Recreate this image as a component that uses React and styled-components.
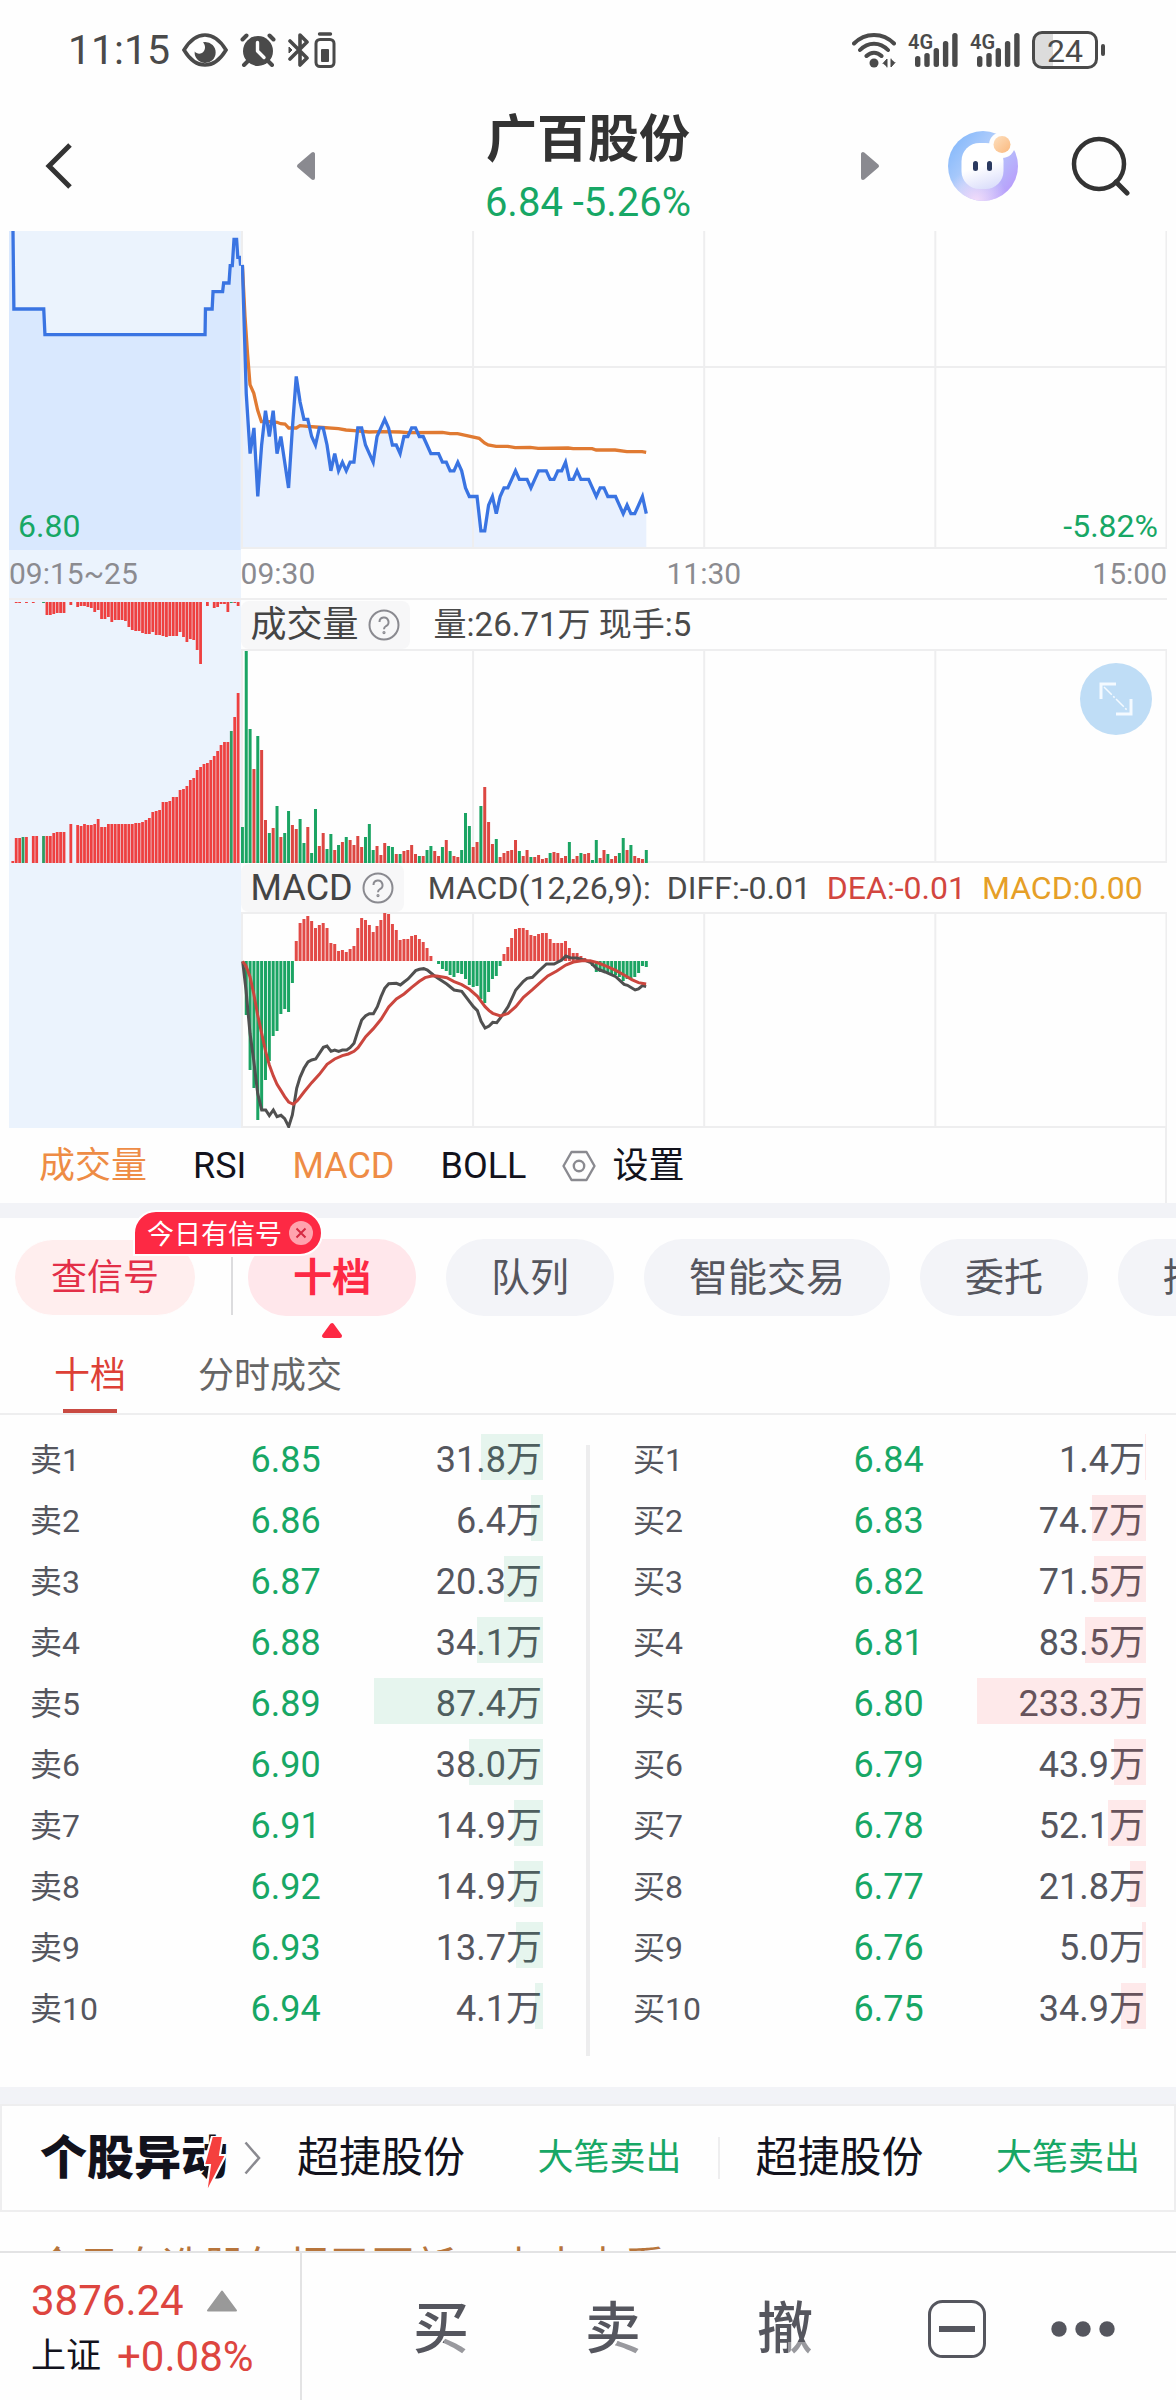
import React from "react";
import styled, { createGlobalStyle } from "styled-components";

const GREEN = "#17a765";
const RED = "#dd453f";
const SIGNAL = "#fd2944";
const INK = "#55565e";
const LINE = "#eeeeef";
const BAND = "#f2f3f7";

const GlobalStyle = createGlobalStyle`
  * { box-sizing: border-box; }
  body { margin: 0; background: #fff; }
  body, button {
    font-family: Roboto, "Noto Sans CJK SC", sans-serif;
    color: #333;
  }
  button {
    padding: 0;
    border: 0;
    background: none;
    cursor: pointer;
    white-space: nowrap;
  }
  svg { display: block; flex: none; }
  a { color: inherit; text-decoration: none; }
`;

const Screen = styled.div`
  display: flex;
  flex-direction: column;
  height: 100vh;
  overflow: hidden;
  background: #fefefe;
`;

const Main = styled.main`
  flex: 1;
  min-height: 0;
  overflow: hidden;
`;

/* ---------- status bar ---------- */

const StatusBar = styled.div`
  display: flex;
  flex: none;
  justify-content: space-between;
  align-items: center;
  height: 103px;
  padding: 0 71px 4px 68px;
  color: #4a4a4a;
`;

const StatusGroup = styled.div`
  display: flex;
  align-items: center;
  gap: 12px;
`;

const Clock = styled.time`
  font-size: 41px;
  line-height: 42px;
`;

const Signal = styled.div`
  position: relative;
  width: 50px;
  height: 36px;
  span {
    position: absolute;
    left: 0;
    top: 0;
    font-size: 20px;
    line-height: 20px;
    font-weight: 600;
  }
`;

const Battery = styled.div`
  display: flex;
  align-items: center;
  gap: 3px;
  &::after {
    content: "";
    width: 4px;
    height: 12px;
    border-radius: 2px;
    background: #4a4a4a;
  }
`;

const BatteryBody = styled.div`
  width: 66px;
  height: 38px;
  border: 3px solid #4a4a4a;
  border-radius: 10px;
  background: linear-gradient(to right, #dcdcdc 30%, transparent 30%);
  font-size: 32px;
  line-height: 34px;
  text-align: center;
`;

/* ---------- header ---------- */

const Header = styled.header`
  display: grid;
  flex: none;
  grid-template-columns: 316px minmax(0, 1fr) 316px;
  height: 128px;
`;

const HeaderSide = styled.div`
  display: flex;
  align-items: center;
  justify-content: space-between;
  padding: ${(p) => (p.$end ? "0 45px 4px 0" : "0 0 4px 44px")};
`;

const HeaderActions = styled.div`
  display: flex;
  align-items: center;
  gap: 53px;
`;

const StockTitle = styled.div`
  padding-top: 3px;
  text-align: center;
  h1 {
    margin: 0;
    font-size: 51px;
    line-height: 68px;
    font-weight: 700;
  }
  p {
    margin: 0;
    font-size: 40px;
    line-height: 58px;
    color: ${GREEN};
  }
`;

/* ---------- charts ---------- */

const Charts = styled.section`
  padding: 0 9px;
`;

const Pane = styled.div`
  position: relative;
  display: grid;
  grid-template-columns: minmax(0, 20fr) minmax(0, 80fr);
`;

const AuctionCell = styled.div`
  background: #ebf3fd;
`;

const Plot = styled.svg`
  width: 100%;
  height: ${(p) => p.$height}px;
`;

const PriceMark = styled.span`
  position: absolute;
  bottom: 4px;
  ${(p) => (p.$end ? "right: 9px" : "left: 9px")};
  font-size: 32px;
  line-height: 40px;
  color: ${GREEN};
`;

const Axis = styled.div`
  display: grid;
  grid-template-columns: minmax(0, 20fr) minmax(0, 80fr);
  border-bottom: 2px solid ${LINE};
  font-size: 30px;
  line-height: 48px;
  color: #8b8b90;
`;

const AxisTimes = styled.div`
  display: grid;
  grid-template-columns: 1fr 1fr 1fr;
  span:nth-child(2) { text-align: center; }
  span:nth-child(3) { text-align: right; }
`;

const LegendRow = styled.div`
  display: flex;
  align-items: center;
  gap: 24px;
  height: 49px;
`;

const LegendButton = styled.button`
  display: flex;
  align-items: center;
  gap: 9px;
  height: 48px;
  padding: 0 10px;
  border-radius: 8px;
  background: #f7f7f8;
  font-size: 36px;
  line-height: 48px;
  color: #444;
`;

const LegendValues = styled.div`
  display: flex;
  gap: 16px;
  font-size: ${(p) => p.$size}px;
  line-height: 48px;
  color: #4a4a4a;
  white-space: nowrap;
`;

const Tint = styled.span`
  color: ${(p) => p.$color};
`;

const ExpandButton = styled.button`
  position: absolute;
  right: 15px;
  top: 63px;
  display: grid;
  place-items: center;
  width: 72px;
  height: 72px;
  border-radius: 50%;
  background: #bfddf6;
`;

const IndicatorBar = styled.nav`
  display: flex;
  align-items: center;
  gap: 36px;
  height: 75px;
  margin-right: 9px;
  padding-left: 39px;
  border-right: 2px solid ${LINE};
`;

const IndicatorList = styled.div`
  display: flex;
  gap: 46px;
`;

const IndicatorButton = styled.button`
  display: flex;
  align-items: center;
  gap: 16px;
  font-size: 36px;
  line-height: 50px;
  color: ${(p) => (p.$active ? "#ee8c45" : "#12121c")};
`;

const Band = styled.div`
  height: ${(p) => p.$height}px;
  background: ${BAND};
`;

/* ---------- feature pills ---------- */

const PillRow = styled.div`
  display: flex;
  align-items: flex-start;
  padding: 21px 0 0 15px;
`;

const SignalWrap = styled.div`
  position: relative;
  flex: none;
  z-index: 1;
`;

const SignalButton = styled.button`
  height: 77px;
  padding: 0 36px;
  border: solid #fefefe;
  border-width: 1px 0;
  border-radius: 38px;
  background: #ffeeee;
  font-size: 36px;
  line-height: 50px;
  color: #e32f48;
`;

const Bubble = styled.div`
  position: absolute;
  left: 118px;
  top: -29px;
  display: flex;
  align-items: center;
  gap: 7px;
  height: 46px;
  padding: 0 8px 0 12px;
  border: 2px solid #fff;
  border-radius: 23px 23px 23px 0;
  background: ${SIGNAL};
  font-size: 27px;
  line-height: 40px;
  color: #fff;
  white-space: nowrap;
  span { padding-top: 4px; }
`;

const PillDivider = styled.div`
  flex: none;
  width: 2px;
  height: 58px;
  margin: 18px 15px 0 36px;
  background: #dcdcde;
`;

const PillList = styled.div`
  display: flex;
  flex: 1;
  gap: 30px;
  min-width: 0;
  padding-bottom: 22px;
  overflow: hidden;
`;

const Pill = styled.button`
  position: relative;
  flex: none;
  height: 77px;
  padding: 0 45px;
  border-radius: 38px;
  background: ${(p) => (p.$active ? "#ffe7eb" : "#f3f4f8")};
  font-size: 39px;
  line-height: 50px;
  font-weight: ${(p) => (p.$active ? 700 : 400)};
  color: ${(p) => (p.$active ? SIGNAL : INK)};
  svg {
    position: absolute;
    left: 50%;
    top: 83px;
    margin-left: -11px;
  }
`;

const SubTabs = styled.div`
  display: flex;
  gap: 72px;
  height: 77px;
  padding-left: 54px;
  border-bottom: 2px solid ${LINE};
`;

const SubTab = styled.button`
  position: relative;
  font-size: 36px;
  line-height: 50px;
  color: ${(p) => (p.$active ? "#dd4036" : "#666")};
  &::after {
    content: "";
    position: absolute;
    left: 9px;
    right: 9px;
    bottom: 0;
    height: 4px;
    background: ${(p) => (p.$active ? "#c94a42" : "transparent")};
  }
`;

/* ---------- order book ---------- */

const Book = styled.section`
  display: grid;
  grid-template-columns: minmax(0, 1fr) 4px minmax(0, 1fr);
  height: 672px;
`;

const BookDivider = styled.div`
  margin: 30px 0 31px;
  background: #ededee;
`;

const BookSide = styled.div`
  padding: ${(p) => (p.$buy ? "11px 30px 0 43px" : "11px 43px 0 30px")};
`;

const BookTable = styled.table`
  width: 100%;
  border-collapse: collapse;
  table-layout: fixed;
  col:nth-child(1) { width: 43%; }
  col:nth-child(2) { width: 24%; }
  col:nth-child(3) { width: 33%; }
  tr { height: 61px; }
  th, td {
    font-weight: 400;
    text-align: left;
    white-space: nowrap;
  }
`;

const LevelCell = styled.th`
  padding: 6px 0 0;
  font-size: 32px;
  line-height: 46px;
  color: ${INK};
`;

const PriceCell = styled.td`
  padding: 6px 0 0;
  font-size: 36px;
  line-height: 46px;
  color: ${GREEN};
`;

const VolumeCell = styled.td`
  padding: 0;
  font-size: 36px;
  line-height: 52px;
  color: ${INK};
`;

const VolumeBox = styled.div`
  position: relative;
  height: 46px;
  padding-right: 1px;
  text-align: right;
`;

const VolumeBar = styled.span`
  position: absolute;
  right: 0;
  top: 0;
  bottom: 0;
  background: ${(p) => (p.$buy ? "rgba(255, 60, 70, 0.11)" : "rgba(23, 167, 101, 0.1)")};
`;

/* ---------- movers ticker ---------- */

const Ticker = styled.section`
  display: flex;
  align-items: center;
  height: 108px;
  padding: 0 34px 0 38px;
  border: 2px solid ${LINE};
`;

const Brand = styled.a`
  position: relative;
  display: flex;
  align-items: center;
  gap: 16px;
  width: 257px;
  font-size: 47px;
  font-weight: 900;
  line-height: 60px;
  color: #12121c;
  white-space: nowrap;
`;

const Bolt = styled.svg`
  position: absolute;
  left: 164px;
  top: 8px;
`;

const Mover = styled.a`
  display: flex;
  flex: 1;
  justify-content: space-between;
  align-items: center;
  font-size: 42px;
  line-height: 60px;
  color: #12121c;
  white-space: nowrap;
  span {
    font-size: 36px;
    color: ${GREEN};
  }
`;

const MoverDivider = styled.div`
  width: 2px;
  height: 42px;
  margin: 0 36px;
  background: ${LINE};
`;

const Promo = styled.a`
  display: block;
  padding: 26px 36px 0;
  font-size: 42px;
  line-height: 60px;
  color: #b7753c;
  white-space: nowrap;
`;

/* ---------- bottom bar ---------- */

const BottomBar = styled.footer`
  display: flex;
  flex: none;
  height: 149px;
  border-top: 2px solid #e3e3e4;
`;

const IndexCell = styled.div`
  display: flex;
  flex-direction: column;
  justify-content: center;
  width: 302px;
  padding: 4px 0 0 31px;
  border-right: 2px solid #e3e3e4;
`;

const IndexLine = styled.div`
  display: flex;
  align-items: center;
  gap: ${(p) => p.$gap}px;
  font-size: 42px;
  line-height: 56px;
  color: ${RED};
  span {
    font-size: 35px;
    color: #12121c;
  }
`;

const TradeActions = styled.div`
  display: flex;
  flex: 1;
  align-items: center;
  padding: 5px 53px 0;
`;

const TradeButton = styled.button`
  display: flex;
  flex: ${(p) => (p.$narrow ? 80 : 172)} 1 0;
  justify-content: center;
  align-items: center;
  height: 72px;
  font-size: 56px;
  font-weight: 500;
  line-height: 72px;
  color: ${INK};
`;

const Fade = styled.span`
  position: relative;
  &::after {
    content: "";
    position: absolute;
    right: 0;
    bottom: 8px;
    width: 25px;
    height: ${(p) => p.$height}px;
    background: rgba(255, 255, 255, 0.4);
  }
`;

/* ---------- data ---------- */

// Minute prices since 09:30, in cents.
const prices = [
  713, 698, 691, 694, 686, 692, 696, 693, 696, 691, 693, 690, 687, 694, 700, 697,
  695, 695, 693, 692, 694, 694, 692, 689, 691, 689, 690, 689, 690, 690, 694, 694,
  692, 691, 690, 693, 694, 695, 694, 692, 692, 691, 693, 693, 694, 694, 693, 693,
  692, 691, 691, 691, 690, 690, 689, 689, 690, 689, 687, 686, 686, 686, 682, 682,
  685, 686, 684, 686, 687, 687, 688, 689, 688, 688, 688, 687, 688, 689, 689, 689,
  688, 688, 689, 689, 690, 688, 688, 689, 688, 688, 688, 687, 686, 687, 687, 686,
  686, 686, 685, 684, 685, 684, 684, 685, 686, 684,
];

const average =
  "1.4,34.7 4,85.7 6.5,122.3 9,153.7 12.8,162.3 16.6,179 20.4,190.7 28.4,190.7 36,191.3 39.7,192.7 44,193 47.7,197 55.3,197 59,194.7 66.7,195.3 74.7,196 97.4,197.7 105,199 113,199.7 128,201 140,200.7 159,201 167,201.7 201.3,201.3 209,202.7 216.5,202.7 224.5,204.3 238,207.3 243.4,212 247,214 255,215.3 266.6,215.3 274,216.7 289,216.3 297,217.3 327,217 332,217.7 351,217.7 355,219 374,219 385.7,220.7 401,220.7 405,221.3";

const auctionPrice =
  "4,0 4.9,78 34.8,78 36,103.7 196.4,103.7 196.8,78 203.5,78 204.4,60.7 214,60.7 215,52 220.4,52 221.6,34.7 223.7,34.7 225.4,8.3 228,8.3 229.2,26.3 231.3,26.3 232,34.7";

// Minute volumes; a negative value is a falling minute.
const volumes = [
  -36, -212, -134, 94, -127, 113, 43, -30, 35, -57, 26, -30, -52, 38, 34, -44,
  -20, 36, -10, -54, 17, 30, -14, -29, 13, -18, 21, -26, 23, 18, 27, 16,
  -26, -39, -13, 17, 8, 20, -17, -16, 9, -9, 12, 13, 18, 9, -7, 7,
  -13, -17, 12, 7, -16, 23, -12, 7, 6, -13, -50, -37, 16, 21, -57, 76,
  41, 19, -24, 6, 10, 12, 13, 23, -12, 7, 13, -6, 6, 8, 4, 5,
  -10, 11, 10, 5, 7, -21, 4, 7, -10, 9, 10, -3, -23, 5, 13, -9,
  4, 7, -10, -25, 13, -18, 7, 5, 4, -13,
];

const auctionMatched = [
  2, 25, 25, -26, 26, 0, 27, 27, 0, -27, 27, 27, 30, 31, 31, 31, 0, 39, 0, 38, 37,
  39, 38, 38, 39, 44, 36, 36, 39, 39, 39, 39, 39, 39, 39, 39, 40, 40, 41, 43, 45,
  51, 52, 53, 61, 61, 62, 66, 66, 73, 74, 77, 83, 85, 93, 96, 99, 100, 103, 107,
  112, 118, 121, 121, -132, 146, 170,
];

const auctionUnmatched = [
  0, 1, 1, 0, 1, 0, 1, 0, 0, -1, 13, 13, 12, 11, 11, 11, 0, 3, 0, 5, 4,
  4, 5, 6, 10, 8, 17, 17, 15, 20, 18, 18, 18, 19, 25, 28, 29, 29, 31, 32, 32,
  30, 33, 33, 34, 35, 34, 34, 34, 30, 35, 40, 37, 38, 48, 62, 0, 4, 0, 6,
  5, 2, 2, 10, -1, 1, 4,
];

const histogram = [
  0, -54, -109, -127, -159, -149, -119, -100, -75, -70, -53, -48, -51, -22, 20, 38,
  42, 45, 40, 33, 36, 38, 33, 18, 17, 10, 11, 9, 12, 15, 33, 43,
  41, 36, 29, 35, 41, 48, 47, 37, 31, 21, 22, 22, 25, 26, 22, 19,
  13, 5, 0, -3, -8, -10, -14, -16, -12, -13, -18, -24, -26, -25, -38, -42,
  -31, -18, -15, -5, 7, 14, 23, 32, 33, 33, 31, 26, 25, 27, 28, 28,
  22, 18, 18, 18, 20, 13, 8, 8, 5, 3, 1, -5, -11, -11, -11, -13,
  -14, -14, -16, -20, -18, -18, -16, -12, -5, -6,
];

// Both curves are drawn on a grid three times finer than the pane.
const diffLine =
  "128,304 138,390 150,520 161,600 173,700 185,750 197,750 208,767 220,750 231,770 243,766 254,776 266,800 277,765 283,728 290,685 300,652 312,625 324,606 335,600 347,597 370,562 381,558 393,574 404,570 416,574 427,570 440,570 450,563 462,550 474,512 485,480 497,467 508,461 520,461 532,440 543,410 554,385 566,371 589,370 601,375 612,366 624,357 647,332 658,328 671,326 682,330 700,345 716,356 740,372 762,390 785,394 797,410 820,440 832,452 843,484 855,504 867,498 878,487 890,488 901,474 924,440 947,390 970,364 981,355 997,352 1016,333 1039,312 1062,312 1085,300 1097,288 1110,293 1130,294 1155,301 1172,308 1190,326 1215,336 1247,350 1272,373 1282,376 1305,390 1315,387 1327,377 1338,380";
const deaLine =
  "128,304 138,318 150,350 161,400 173,465 185,520 197,575 208,615 220,648 231,673 243,692 254,710 266,726 280,733 293,721 312,696 335,668 358,643 381,613 404,597 427,587 445,582 462,574 474,563 497,530 520,506 543,478 566,441 589,417 612,402 635,382 658,364 675,353 695,348 710,348 740,353 762,365 785,374 808,388 832,409 855,440 867,452 878,460 901,468 924,460 947,440 970,412 997,389 1020,368 1043,348 1070,333 1097,315 1120,306 1145,302 1170,302 1195,309 1220,319 1247,331 1272,345 1295,359 1315,368 1338,372";

const sells = [
  ["6.85", 31.8], ["6.86", 6.4], ["6.87", 20.3], ["6.88", 34.1], ["6.89", 87.4],
  ["6.90", 38.0], ["6.91", 14.9], ["6.92", 14.9], ["6.93", 13.7], ["6.94", 4.1],
];
const buys = [
  ["6.84", 1.4], ["6.83", 74.7], ["6.82", 71.5], ["6.81", 83.5], ["6.80", 233.3],
  ["6.79", 43.9], ["6.78", 52.1], ["6.77", 21.8], ["6.76", 5.0], ["6.75", 34.9],
];

const MINUTE = 3.845;
const minuteX = (i) => 1.4 + i * MINUTE;
const auctionX = (i) => 2.4 + i * 3.42;

/* ---------- chart parts ---------- */

function Grid({ top, bottom, open }) {
  return (
    <g stroke={LINE} strokeWidth="2">
      {[1, 232, 463, 694, 925].map((x) => (
        <line key={x} x1={x} x2={x} y1={top} y2={bottom} />
      ))}
      {!open && <line x1="0" x2="926" y1={top} y2={top} />}
      <line x1="0" x2="926" y1={bottom} y2={bottom} />
    </g>
  );
}

function PricePane() {
  const points = prices.map((p, i) => `${minuteX(i)},${(317 - (p - 680) * 8.58).toFixed(1)}`).join(" ");
  const lastX = minuteX(prices.length - 1);
  return (
    <Pane>
      <AuctionCell>
        <Plot $height={319} viewBox="0 0 232 319" preserveAspectRatio="none" aria-hidden="true">
          <polygon points={`${auctionPrice} 232,319 0,319 0,0`} fill="#d9e8fe" />
          <polyline points={auctionPrice} fill="none" stroke="#3a74e2" strokeWidth="3.3" />
        </Plot>
      </AuctionCell>
      <Plot $height={319} viewBox="0 0 926 319" preserveAspectRatio="none" aria-hidden="true">
        <polygon points={`${points} ${lastX},316 1,316`} fill="#e9f1fe" />
        <Grid top={0} bottom={317} open />
        <line x1="0" x2="926" y1="136" y2="136" stroke={LINE} strokeWidth="2" />
        <polyline points={average} fill="none" stroke="#e07a32" strokeWidth="3.3" />
        <polyline points={points} fill="none" stroke="#3a74e2" strokeWidth="3.3" />
      </Plot>
      <PriceMark>6.80</PriceMark>
      <PriceMark $end>-5.82%</PriceMark>
    </Pane>
  );
}

function VolumePane() {
  return (
    <Pane>
      <AuctionCell>
        <Plot $height={263} viewBox="0 0 232 263" preserveAspectRatio="none" aria-hidden="true">
          {auctionMatched.map((v, i) => (
            <rect key={i} x={auctionX(i)} y={263 - Math.abs(v)} width="2.8" height={Math.abs(v)} fill={v < 0 ? "#2f9c62" : "#ee4040"} />
          ))}
          {auctionUnmatched.map((v, i) => (
            <rect key={i} x={auctionX(i)} y="2" width="2.8" height={Math.abs(v)} fill={v < 0 ? "#2f9c62" : "#ee4040"} />
          ))}
        </Plot>
      </AuctionCell>
      <div>
        <LegendRow>
          <LegendButton>
            成交量
            <HelpIcon />
          </LegendButton>
          <LegendValues $size={33}>量:26.71万 现手:5</LegendValues>
        </LegendRow>
        <Plot $height={214} viewBox="0 0 926 214" preserveAspectRatio="none" aria-hidden="true">
          <Grid top={1} bottom={213} />
          {volumes.map((v, i) => (
            <rect key={i} x={minuteX(i) - 1.5} y={214 - Math.abs(v)} width="3" height={Math.abs(v)} fill={v < 0 ? "#1ba463" : "#dc4742"} />
          ))}
        </Plot>
      </div>
      <ExpandButton aria-label="全屏">
        <svg width="34" height="34" viewBox="0 0 34 34" fill="none" stroke="#f4faff">
          <path d="M2 17V2h15M17 32h15V17" strokeWidth="3" />
          <path d="M5 5l24 24" strokeWidth="1.5" strokeDasharray="11 2 2 2" />
        </svg>
      </ExpandButton>
    </Pane>
  );
}

function MacdPane() {
  return (
    <Pane>
      <AuctionCell />
      <div>
        <LegendRow>
          <LegendButton>
            MACD
            <HelpIcon />
          </LegendButton>
          <LegendValues $size={32}>
            <span>MACD(12,26,9):</span>
            <span>DIFF:-0.01</span>
            <Tint $color="#d2463f">DEA:-0.01</Tint>
            <Tint $color="#e69f27">MACD:0.00</Tint>
          </LegendValues>
        </LegendRow>
        <Plot $height={216} viewBox="0 0 926 216" preserveAspectRatio="none" aria-hidden="true">
          <Grid top={1} bottom={215} />
          {histogram.map((v, i) => (
            <rect key={i} x={minuteX(i) - 1.5} y={v > 0 ? 49 - v : 49} width="3" height={Math.abs(v)} fill={v < 0 ? "#1ba463" : "#e24a46"} />
          ))}
          <g transform="translate(-41 -52) scale(0.3333)" fill="none" strokeWidth="9">
            <polyline points={diffLine} stroke="#505050" />
            <polyline points={deaLine} stroke="#cb463e" />
          </g>
        </Plot>
      </div>
    </Pane>
  );
}

/* ---------- icons ---------- */

function HelpIcon() {
  return (
    <svg width="32" height="32" viewBox="0 0 32 32" fill="none" stroke="#8a8a90" strokeWidth="2">
      <circle cx="16" cy="16" r="14.5" />
      <path d="M11.5 13a4.5 4.5 0 1 1 6.6 4c-1.5.9-2.1 1.6-2.1 3.2" />
      <circle cx="16" cy="23.6" r="0.6" />
    </svg>
  );
}

function EyeIcon() {
  return (
    <svg width="46" height="34" viewBox="0 0 46 34">
      <path d="M2 17C8 7 15 2 23 2s15 5 21 15c-6 10-13 15-21 15S8 27 2 17z" fill="none" stroke="#4a4a4a" strokeWidth="3.6" />
      <path d="M23 9a10.500 10.500 0 1 1-10.300 9.500c2 2.500 6 3 8.500.5 2.500-2.800 2.500-6.500-.2-9.800z" fill="#4a4a4a" />
    </svg>
  );
}

function AlarmIcon() {
  return (
    <svg width="36" height="34" viewBox="0 0 36 34" stroke="#4a4a4a" strokeWidth="4" strokeLinecap="round" fill="none">
      <circle cx="18" cy="18" r="15" fill="#4a4a4a" stroke="none" />
      <path d="M2.500 6.500l4-4M33.500 6.500l-4-4M8 28l-4 4M28 28l4 4" />
      <path d="M17.500 9.500V18l6.500 6.500" stroke="#fefefe" strokeWidth="3.400" strokeLinejoin="round" />
    </svg>
  );
}

function BluetoothIcon() {
  return (
    <svg width="48" height="36" viewBox="0 0 48 36" stroke="#4a4a4a" fill="none">
      <path d="M2 9l17 17-7 7V3l7 7L2 27" strokeWidth="3.600" strokeLinejoin="round" strokeLinecap="round" />
      <path d="M1 15l3 3-3 3z" fill="#4a4a4a" strokeWidth="1" />
      <rect x="28" y="7.500" width="18" height="27" rx="4" strokeWidth="3" />
      <rect x="33" y="17" width="8" height="13" rx="1" fill="#4a4a4a" stroke="none" />
      <path d="M31.500 2h11" strokeWidth="3.400" strokeLinecap="round" />
    </svg>
  );
}

function WifiIcon() {
  return (
    <svg width="44" height="36" viewBox="0 0 44 36" stroke="#4a4a4a" strokeWidth="4" strokeLinecap="round" fill="none">
      <path d="M2 11.500C13 0 31 0 42 11.500M8 18c8-8.500 20-8.500 28 0M14.500 24c4.500-4.500 10.500-4.500 15 0" />
      <circle cx="22" cy="31" r="4.500" fill="#4a4a4a" stroke="none" />
      <path d="M31 31.500l4-4.500v8M43 30.500l-4 4.500v-8" fill="#4a4a4a" strokeWidth="1" />
    </svg>
  );
}

function SignalIcon() {
  return (
    <Signal>
      <svg width="50" height="36" viewBox="0 0 50 36" fill="#4a4a4a">
        {[11, 14, 19, 26, 34].map((h, i) => (
          <rect key={h} x={7 + i * 9.3} y={35 - h} width="5.400" height={h} rx="2.500" />
        ))}
      </svg>
      <span>4G</span>
    </Signal>
  );
}

function AssistantIcon() {
  return (
    <svg width="70" height="80" viewBox="0 0 70 80">
      <defs>
        <linearGradient id="ring" x1="0.1" y1="0.2" x2="0.9" y2="0.8">
          <stop offset="0" stopColor="#8cbcfb" />
          <stop offset="0.45" stopColor="#b5cffb" />
          <stop offset="1" stopColor="#b8a0fb" />
        </linearGradient>
        <radialGradient id="glow" cx="0.4" cy="1" r="0.45">
          <stop offset="0" stopColor="#f3dcfa" />
          <stop offset="1" stopColor="#f3dcfa" stopOpacity="0" />
        </radialGradient>
        <linearGradient id="face" x1="0.3" y1="0" x2="0.6" y2="1">
          <stop offset="0.5" stopColor="#fff" />
          <stop offset="1" stopColor="#dcdffb" />
        </linearGradient>
        <linearGradient id="orb" x1="0" y1="0" x2="1" y2="1">
          <stop offset="0" stopColor="#fde0bf" />
          <stop offset="1" stopColor="#fbb87d" />
        </linearGradient>
      </defs>
      <circle cx="35" cy="40" r="35" fill="url(#ring)" />
      <circle cx="35" cy="40" r="35" fill="url(#glow)" />
      <circle cx="54" cy="19" r="13" fill="#fefefe" />
      <path d="M48 4l18 20 8-22z" fill="#fefefe" />
      <rect x="13.500" y="17" width="42" height="46" rx="18" fill="url(#face)" />
      <circle cx="54" cy="18.500" r="8.500" fill="url(#orb)" />
      <rect x="25" y="35" width="5" height="10" rx="2.500" fill="#2b3a60" />
      <rect x="39" y="35" width="5" height="10" rx="2.500" fill="#2b3a60" />
    </svg>
  );
}

/* ---------- sections ---------- */

function BookHalf({ name, rows, buy }) {
  const max = Math.max(...rows.map((r) => r[1]));
  return (
    <BookSide $buy={buy}>
      <BookTable aria-label={name === "买" ? "买盘" : "卖盘"}>
        <colgroup>
          <col />
          <col />
          <col />
        </colgroup>
        <tbody>
          {rows.map(([price, volume], i) => (
            <tr key={price}>
              <LevelCell scope="row">{name + (i + 1)}</LevelCell>
              <PriceCell>{price}</PriceCell>
              <VolumeCell>
                <VolumeBox>
                  <VolumeBar $buy={buy} style={{ width: `${(volume / max) * 100}%` }} />
                  {volume.toFixed(1)}万
                </VolumeBox>
              </VolumeCell>
            </tr>
          ))}
        </tbody>
      </BookTable>
    </BookSide>
  );
}

export default function App() {
  return (
    <Screen>
      <GlobalStyle />
      <StatusBar>
        <StatusGroup>
          <Clock>11:15</Clock>
          <EyeIcon />
          <AlarmIcon />
          <BluetoothIcon />
        </StatusGroup>
        <StatusGroup>
          <WifiIcon />
          <SignalIcon />
          <SignalIcon />
          <Battery>
            <BatteryBody>24</BatteryBody>
          </Battery>
        </StatusGroup>
      </StatusBar>

      <Header>
        <HeaderSide>
          <button aria-label="返回">
            <svg width="28" height="46" viewBox="0 0 28 46" fill="none" stroke="#333" strokeWidth="5">
              <path d="M26 2L5 23l21 21" />
            </svg>
          </button>
          <button aria-label="上一只">
            <svg width="20" height="30" viewBox="0 0 20 30" fill="#8a8a90" stroke="#8a8a90" strokeWidth="4" strokeLinejoin="round">
              <path d="M17 3v24L3 15z" />
            </svg>
          </button>
        </HeaderSide>
        <StockTitle>
          <h1>广百股份</h1>
          <p>6.84 -5.26%</p>
        </StockTitle>
        <HeaderSide $end>
          <button aria-label="下一只">
            <svg width="20" height="30" viewBox="0 0 20 30" fill="#8a8a90" stroke="#8a8a90" strokeWidth="4" strokeLinejoin="round">
              <path d="M3 3v24l14-12z" />
            </svg>
          </button>
          <HeaderActions>
            <button aria-label="智能助手">
              <AssistantIcon />
            </button>
            <button aria-label="搜索">
              <svg width="60" height="60" viewBox="0 0 60 60" fill="none" stroke="#333" strokeWidth="4.500" strokeLinecap="round">
                <circle cx="28" cy="28" r="25" />
                <path d="M45 46l11 11" strokeWidth="5" />
              </svg>
            </button>
          </HeaderActions>
        </HeaderSide>
      </Header>

      <Main>
        <Charts>
          <PricePane />
          <Axis>
            <AuctionCell>09:15~25</AuctionCell>
            <AxisTimes>
              <span>09:30</span>
              <span>11:30</span>
              <span>15:00</span>
            </AxisTimes>
          </Axis>
          <VolumePane />
          <MacdPane />
        </Charts>

        <IndicatorBar>
          <IndicatorList>
            <IndicatorButton $active>成交量</IndicatorButton>
            <IndicatorButton>RSI</IndicatorButton>
            <IndicatorButton $active>MACD</IndicatorButton>
            <IndicatorButton>BOLL</IndicatorButton>
          </IndicatorList>
          <IndicatorButton>
            <svg width="34" height="32" viewBox="0 0 34 32" fill="none" stroke="#8a8a90" strokeWidth="2.400">
              <path d="M9.500 2h15L32.500 16l-8 14h-15L1.500 16z" strokeLinejoin="round" />
              <circle cx="17" cy="16" r="5.200" />
            </svg>
            设置
          </IndicatorButton>
        </IndicatorBar>
        <Band $height={15} />

        <PillRow>
          <SignalWrap>
            <SignalButton>查信号</SignalButton>
            <Bubble>
              <span>今日有信号</span>
              <svg width="24" height="24" viewBox="0 0 24 24">
                <circle cx="12" cy="12" r="12" fill="#ffa3ae" />
                <path d="M7.500 7.500l9 9M16.500 7.500l-9 9" stroke="#d52a42" strokeWidth="2" />
              </svg>
            </Bubble>
          </SignalWrap>
          <PillDivider />
          <PillList>
            <Pill $active>
              十档
              <svg width="22" height="17" viewBox="0 0 22 17" fill={SIGNAL} stroke={SIGNAL} strokeWidth="4" strokeLinejoin="round">
                <path d="M11 3L3 14h16z" />
              </svg>
            </Pill>
            <Pill>队列</Pill>
            <Pill>智能交易</Pill>
            <Pill>委托</Pill>
            <Pill>持仓</Pill>
          </PillList>
        </PillRow>

        <SubTabs>
          <SubTab $active>十档</SubTab>
          <SubTab>分时成交</SubTab>
        </SubTabs>

        <Book>
          <BookHalf name="卖" rows={sells} />
          <BookDivider />
          <BookHalf name="买" rows={buys} buy />
        </Book>
        <Band $height={17} />

        <Ticker>
          <Brand href="#movers">
            个股异动
            <Bolt width="22" height="60" viewBox="0 0 22 60">
              <path d="M8 0h11l-3 19h6L2 58l4-29H0z" fill="#f5403e" stroke="#fefefe" strokeWidth="2" />
            </Bolt>
            <svg width="17" height="34" viewBox="0 0 17 34" fill="none" stroke="#8a8a90" strokeWidth="2.500">
              <path d="M1.500 1.500L15 17 1.500 32.500" />
            </svg>
          </Brand>
          <Mover href="#mover-1">
            超捷股份 <span>大笔卖出</span>
          </Mover>
          <MoverDivider />
          <Mover href="#mover-2">
            超捷股份 <span>大笔卖出</span>
          </Mover>
        </Ticker>
        <Promo href="#report">今日自选股午报已更新，点击查看</Promo>
      </Main>

      <BottomBar>
        <IndexCell>
          <IndexLine $gap={22}>
            3876.24
            <svg width="32" height="22" viewBox="0 0 32 22" fill="#999" stroke="#999" strokeWidth="2" strokeLinejoin="round">
              <path d="M16 1.500L2 20.500h28z" />
            </svg>
          </IndexLine>
          <IndexLine $gap={16}>
            <span>上证</span>
            +0.08%
          </IndexLine>
        </IndexCell>
        <TradeActions>
          <TradeButton>
            <Fade $height={20}>买</Fade>
          </TradeButton>
          <TradeButton>
            <Fade $height={15}>卖</Fade>
          </TradeButton>
          <TradeButton>
            <Fade $height={15}>撤</Fade>
          </TradeButton>
          <TradeButton aria-label="收起">
            <svg width="58" height="58" viewBox="0 0 58 58" fill="none" stroke={INK}>
              <rect x="1.500" y="1.500" width="55" height="55" rx="13" strokeWidth="3" />
              <path d="M11 29h36" strokeWidth="6" />
            </svg>
          </TradeButton>
          <TradeButton $narrow aria-label="更多">
            <svg width="64" height="16" viewBox="0 0 64 16" fill={INK}>
              <circle cx="8" cy="8" r="7.700" />
              <circle cx="32" cy="8" r="7.700" />
              <circle cx="56" cy="8" r="7.700" />
            </svg>
          </TradeButton>
        </TradeActions>
      </BottomBar>
    </Screen>
  );
}
